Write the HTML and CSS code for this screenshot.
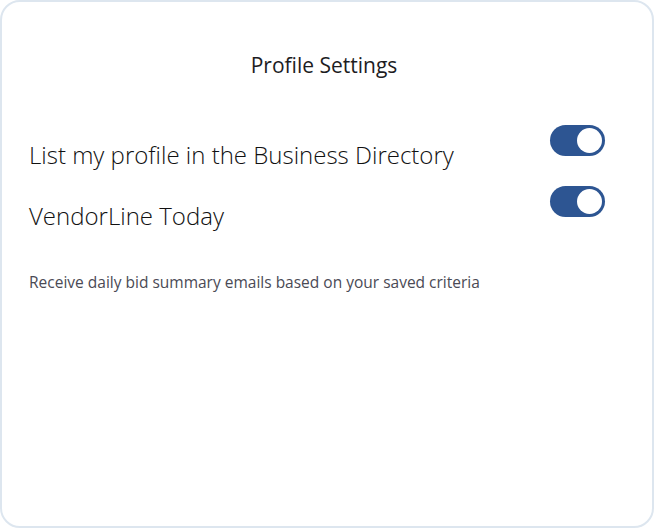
FILE: index.html
```html
<!DOCTYPE html>
<html>
<head>
<meta charset="utf-8">
<link rel="stylesheet" href="styles.css">
</head>
<body>
<div class="card">
  <h1 class="title">Profile Settings</h1>
  <div class="row row-first">
    <span class="label">List my profile in the Business Directory</span>
    <span class="toggle"><span class="knob"></span></span>
  </div>
  <div class="row">
    <span class="label">VendorLine Today</span>
    <span class="toggle"><span class="knob"></span></span>
  </div>
  <p class="desc">Receive daily bid summary emails based on your saved criteria</p>
</div>
</body>
</html>
```
FILE: styles.css
```css
html, body { margin: 0; padding: 0; background: #fff; }
.card {
  width: 654px; height: 528px; box-sizing: border-box;
  border: 2px solid #dde6ef; border-radius: 20px;
  padding: 0 47px 0 27px;
  font-family: "Open Sans", sans-serif; color: #1d1d1f;
}
.title {
  margin: 49px 0 0; text-align: center; font-weight: 400; font-size: 21px;
  line-height: 28px; padding-left: 14px;
}
.row { display: flex; justify-content: space-between; align-items: flex-start; }
.row-first { margin-top: 46px; }
.row + .row { margin-top: 14px; }
.label { font-size: 24px; font-weight: 300; line-height: 34px; margin-top: 13px; color: #111; }
.toggle {
  width: 55px; height: 31px; border-radius: 16px; background: #2d5592;
  display: flex; align-items: center; justify-content: flex-end; padding-right: 3px; box-sizing: border-box;
  flex-shrink: 0;
}
.knob { width: 25px; height: 25px; border-radius: 50%; background: #fff; }
.desc { margin: 39px 0 0; font-size: 15.5px; color: #4a4a55; line-height: 20px; }
```
